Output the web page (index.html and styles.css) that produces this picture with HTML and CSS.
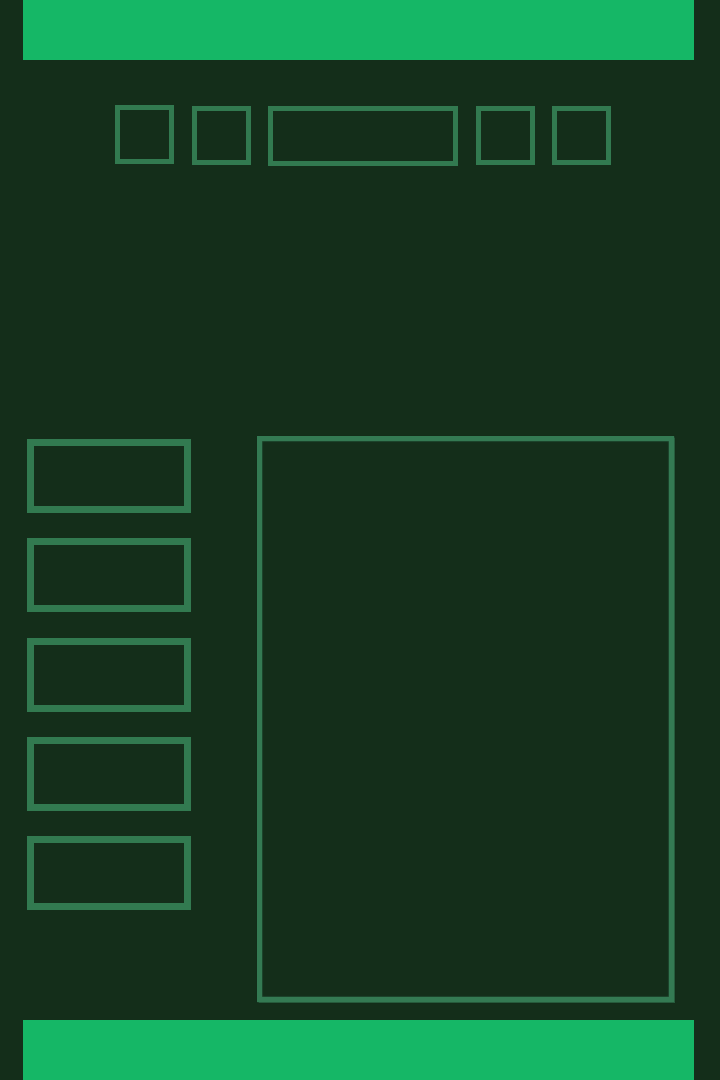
FILE: index.html
```html
<!DOCTYPE html>
<html>
<head>
<meta charset="utf-8">
<link rel="stylesheet" href="styles.css">
</head>
<body>
<div class="page">
  <header class="topbar"></header>
  <nav class="nav">
    <div class="sq first"></div>
    <div class="sq"></div>
    <div class="sq wide"></div>
    <div class="sq"></div>
    <div class="sq"></div>
  </nav>
  <main class="main">
    <aside class="sidebar">
      <div class="item"></div>
      <div class="item"></div>
      <div class="item"></div>
      <div class="item"></div>
      <div class="item"></div>
    </aside>
    <section class="panel"></section>
  </main>
  <footer class="footbar"></footer>
</div>
</body>
</html>
```
FILE: styles.css
```css
html, body {
  margin: 0;
  padding: 0;
  background: #142e1a;
}
.page {
  width: 720px;
  height: 1080px;
  display: flex;
  flex-direction: column;
  background: #142e1a;
}
.topbar {
  margin-left: 23px;
  width: 671px;
  height: 60px;
  background: #15b766;
  flex: none;
}
.nav {
  display: flex;
  align-items: flex-start;
  gap: 17.5px;
  margin-top: 46px;
  padding-left: 115px;
  height: 60px;
  flex: none;
}
.sq {
  box-sizing: border-box;
  width: 59px;
  height: 59px;
  border: 5px solid #327a50;
}
.sq.first {
  margin-top: -1px;
}
.sq.wide {
  width: 190px;
  height: 60px;
}
.main {
  display: flex;
  align-items: flex-start;
  margin-top: 270px;
  flex: none;
}
.sidebar {
  display: flex;
  flex-direction: column;
  gap: 25.3px;
  margin-left: 27px;
  padding-top: 3px;
}
.item {
  box-sizing: border-box;
  width: 164px;
  height: 74px;
  border: 7px solid #327a50;
}
.panel {
  box-sizing: border-box;
  margin-left: 66px;
  width: 417px;
  height: 566px;
  border: 5px solid #347a53;
  box-shadow: 0 0 1px 0.5px rgba(52, 122, 83, 0.6), inset 0 0 1px 0.5px rgba(52, 122, 83, 0.6);
}
.footbar {
  margin-left: 23px;
  width: 671px;
  height: 60px;
  background: #15b766;
  margin-top: auto;
  flex: none;
}
```
